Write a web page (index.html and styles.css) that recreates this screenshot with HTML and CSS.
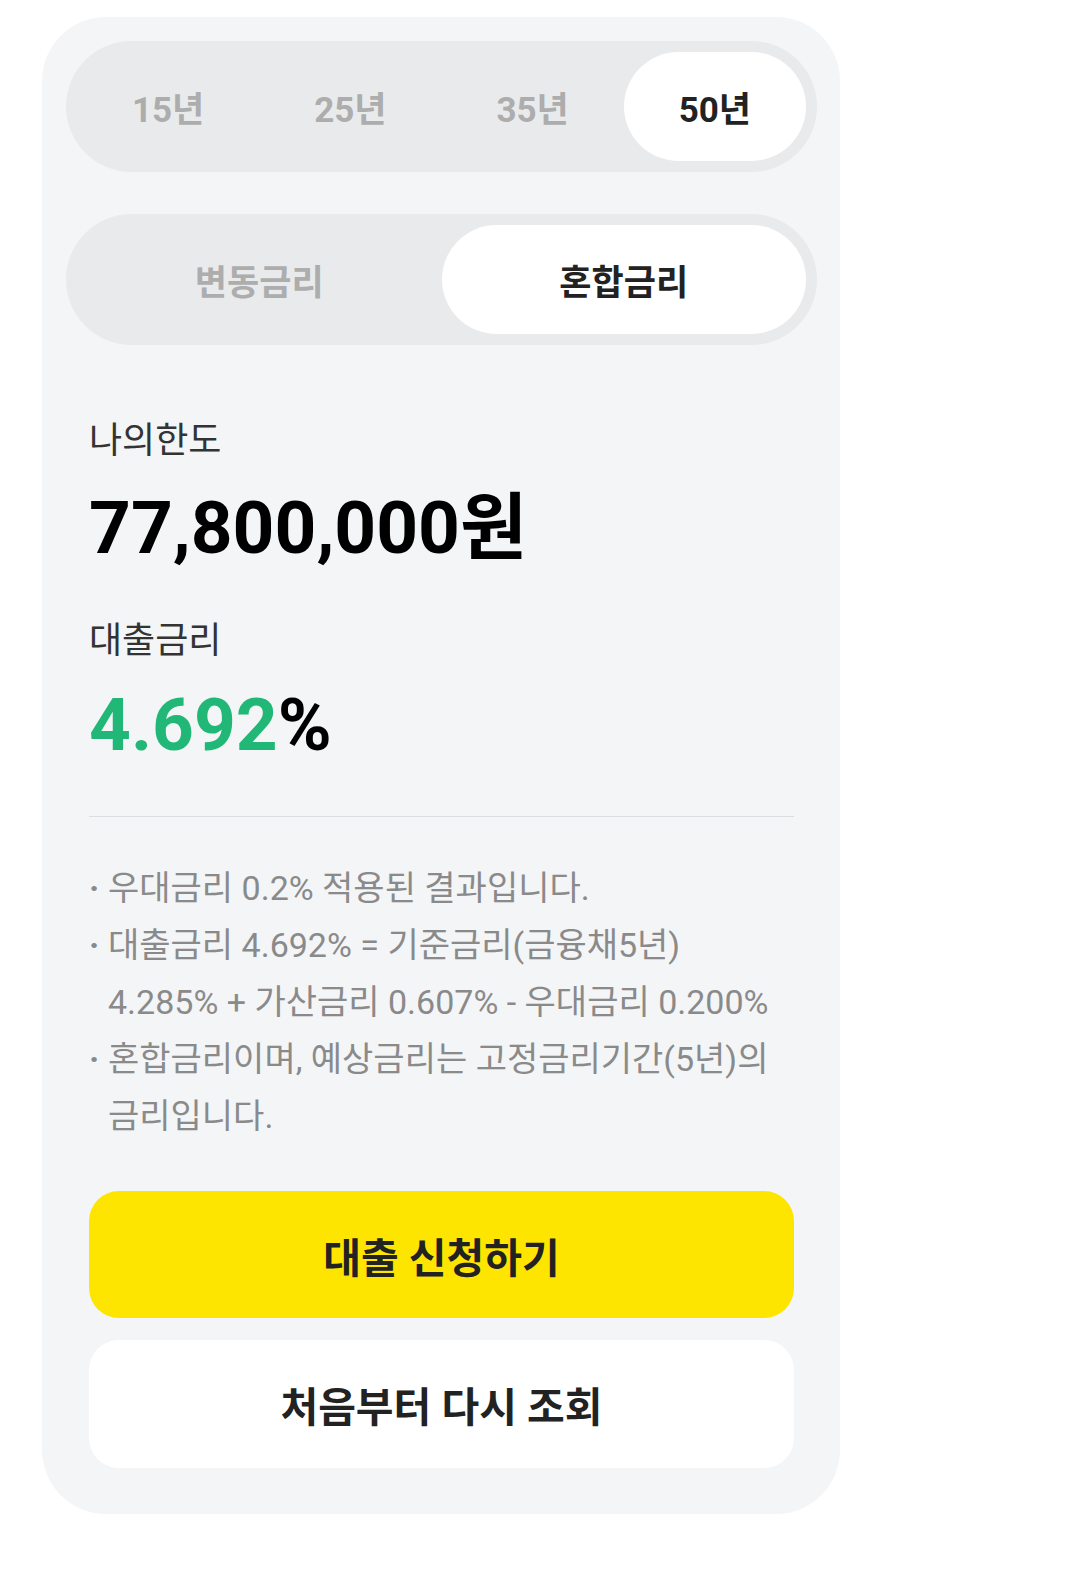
FILE: index.html
```html
<!DOCTYPE html>
<html lang="ko">
<head>
  <meta charset="UTF-8" />
  <title>대출 한도 조회 결과</title>
  <link rel="stylesheet" href="styles.css">
</head>
<body>
  <div class="card">
    <!-- 대출 기간 선택 -->
    <div class="seg">
      <button class="seg-item">15년</button>
      <button class="seg-item">25년</button>
      <button class="seg-item">35년</button>
      <button class="seg-item active">50년</button>
    </div>

    <!-- 금리 유형 선택 -->
    <div class="seg seg-rate">
      <button class="seg-item">변동금리</button>
      <button class="seg-item active">혼합금리</button>
    </div>

    <div class="content">
      <p class="label">나의한도</p>
      <p class="value">77,800,000원</p>

      <p class="label label-rate">대출금리</p>
      <p class="value rate"><span class="green">4.692</span>%</p>

      <hr class="divider">

      <ul class="notes">
        <li><span class="dot">·</span><span>우대금리 0.2% 적용된 결과입니다.</span></li>
        <li><span class="dot">·</span><span>대출금리 4.692% = 기준금리(금융채5년)<br>4.285% + 가산금리 0.607% - 우대금리 0.200%</span></li>
        <li><span class="dot">·</span><span>혼합금리이며, 예상금리는 고정금리기간(5년)의 금리입니다.</span></li>
      </ul>

      <button class="btn btn-apply">대출 신청하기</button>
      <button class="btn btn-reset">처음부터 다시 조회</button>
    </div>
  </div>
</body>
</html>
```

FILE: styles.css
```css
body {
  margin: 0;
  background: #fff;
  font-family: Roboto, "Noto Sans CJK KR", sans-serif;
  color: #111;
}
p {
  margin: 0;
}
button {
  font-family: inherit;
  border: none;
  cursor: pointer;
}
.card {
  box-sizing: border-box;
  width: 798px;
  margin: 17px 0 0 42px;
  padding: 24px 23px 46px 24px;
  background: #f4f5f7;
  border-radius: 64px;
}
.seg {
  display: flex;
  padding: 11px;
  background: #e9eaec;
  border-radius: 66px;
}
.seg-rate {
  margin-top: 42px;
}
.seg-item {
  flex: 1;
  height: 109px;
  background: transparent;
  border-radius: 55px;
  font-size: 35px;
  font-weight: 700;
  color: #adadad;
}
.seg-item.active {
  background: #fff;
  color: #222;
}
.content {
  padding: 0 23px;
}
.label {
  margin-top: 72px;
  font-size: 36px;
  line-height: 48px;
  color: #333;
}
.label-rate {
  margin-top: 49px;
}
.value {
  margin-top: 23px;
  font-size: 73px;
  font-weight: 700;
  line-height: 80px;
  color: #000;
}
.rate {
  margin-top: 20px;
}
.green {
  color: #21b877;
}
.divider {
  margin: 51px 0 0;
  border: none;
  height: 1px;
  background: #dcdde0;
}
.notes {
  list-style: none;
  margin: 43px 0 0;
  padding: 0;
  font-size: 34px;
  line-height: 57px;
  color: #8a8a8a;
  word-break: keep-all;
}
.notes li {
  display: flex;
}
.dot {
  flex: none;
  width: 19px;
  font-weight: 700;
}
.btn {
  display: block;
  width: 100%;
  height: 127px;
  border-radius: 30px;
  font-size: 41px;
  font-weight: 700;
  color: #222;
}
.btn-apply {
  margin-top: 46px;
  background: #fee500;
}
.btn-reset {
  margin-top: 22px;
  height: 128px;
  background: #fff;
}
```
